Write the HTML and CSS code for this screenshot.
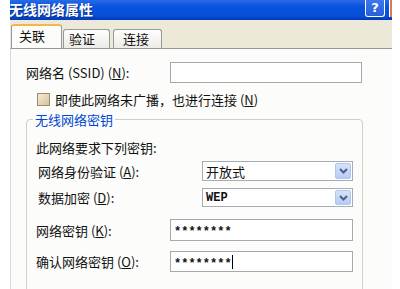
FILE: index.html
```html
<!DOCTYPE html>
<html lang="zh-CN">
<head>
    <meta charset="UTF-8">
    <meta name="viewport" content="width=device-width, initial-scale=1.0">
    <title>无线网络属性</title>
    <link rel="stylesheet" href="styles.css">
</head>
<body>
    <div class="window">
        <div class="titlebar">
            <span class="title">无线网络属性</span>
            <span class="help">?</span>
            <span class="close"></span>
        </div>

        <div class="tabs">
            <div class="tab active">关联</div>
            <div class="tab second">验证</div>
            <div class="tab third">连接</div>
        </div>

        <div class="panel">
            <div class="row ssid">
                <label class="label ssid-label">网络名 (SSID) (<u>N</u>):</label>
                <div class="textbox ssid-box"></div>
            </div>

            <div class="check-row">
                <span class="checkbox"></span>
                <span>即使此网络未广播，也进行连接 (<u>N</u>)</span>
            </div>

            <fieldset class="group">
                <legend>无线网络密钥</legend>

                <div class="row note">此网络要求下列密钥:</div>

                <div class="row auth">
                    <label class="label select-label">网络身份验证 (<u>A</u>):</label>
                    <div class="select">
                        <span class="value">开放式</span>
                        <span class="drop">
                            <svg width="9" height="6" viewBox="0 0 9 6"><path d="M1 1 L4.5 4.5 L8 1" fill="none" stroke="#4d6185" stroke-width="2"/></svg>
                        </span>
                    </div>
                </div>

                <div class="row encrypt">
                    <label class="label select-label">数据加密 (<u>D</u>):</label>
                    <div class="select">
                        <span class="value mono">WEP</span>
                        <span class="drop">
                            <svg width="9" height="6" viewBox="0 0 9 6"><path d="M1 1 L4.5 4.5 L8 1" fill="none" stroke="#4d6185" stroke-width="2"/></svg>
                        </span>
                    </div>
                </div>

                <div class="row key">
                    <label class="label key-label">网络密钥 (<u>K</u>):</label>
                    <div class="textbox key-box"><span class="stars">********</span></div>
                </div>

                <div class="row confirm">
                    <label class="label key-label">确认网络密钥 (<u>O</u>):</label>
                    <div class="textbox key-box"><span class="stars">********</span><span class="caret"></span></div>
                </div>
            </fieldset>
        </div>
    </div>
</body>
</html>
```

FILE: styles.css
```css
* {
    margin: 0;
    padding: 0;
    box-sizing: border-box;
}

body {
    background: #ffffff;
    color: #111111;
    font-family: "Noto Sans CJK SC", sans-serif;
    font-size: 13px;
    overflow: hidden;
}

.window {
    margin-left: 10px;
    width: 382px;
    height: 289px;
    overflow: hidden;
}

/* title bar */
.titlebar {
    height: 20px;
    display: flex;
    align-items: flex-start;
    background: linear-gradient(to bottom, #2a6be6 0%, #0a55de 30%, #0650d8 80%, #0038b8 100%);
}

.title {
    color: #ffffff;
    font-weight: 700;
    font-size: 14px;
    line-height: 18px;
    margin-left: -1px;
    text-shadow: 1px 1px 0 #0a2d8a;
}

.help {
    margin-left: auto;
    width: 20px;
    height: 17px;
    border: 1px solid #ffffff;
    border-top: none;
    border-radius: 0 0 3px 3px;
    background: linear-gradient(to bottom, #3a78ef, #2a5fd6);
    color: #ffffff;
    font-family: "DejaVu Sans", sans-serif;
    font-weight: 700;
    font-size: 13px;
    line-height: 16px;
    text-align: center;
}

.close {
    width: 3px;
    height: 17px;
    margin-left: 4px;
    background: #d8785a;
    border-left: 1px solid #ffffff;
}

/* tabs */
.tabs {
    height: 28px;
    display: flex;
    align-items: flex-end;
    background: #ece9d8;
    padding-left: 1px;
}

.tab {
    height: 19px;
    border: 1px solid #919b9c;
    border-bottom: none;
    border-radius: 3px 3px 0 0;
    background: linear-gradient(to bottom, #ffffff, #ecebe5);
    font-size: 13px;
    line-height: 18px;
    padding-left: 5px;
}

.tab.active {
    width: 51px;
    height: 24px;
    border-top: 2px solid #f2b64c;
    background: #fcfcfa;
    line-height: 20px;
    padding-left: 7px;
}

.tab.second {
    width: 47px;
    margin-left: 1px;
}

.tab.third {
    width: 49px;
    margin-left: 3px;
    padding-left: 9px;
}

/* tab page */
.panel {
    height: 241px;
    border-top: 1px solid #919b9c;
    border-left: 1px solid #d8d8d0;
    background: #fcfcfa;
    padding-left: 15px;
}

.row {
    display: flex;
    align-items: center;
}

.label {
    flex-shrink: 0;
}

.ssid {
    margin-top: 13px;
    height: 21px;
}

.ssid-label {
    width: 144px;
}

.textbox {
    background: #ffffff;
    border: 1px solid #a7a9ab;
    display: flex;
    align-items: center;
}

.ssid-box {
    width: 192px;
    height: 21px;
}

.check-row {
    margin-top: 10px;
    padding-left: 11px;
    height: 13px;
    display: flex;
    align-items: center;
    gap: 5px;
    line-height: 13px;
}

.checkbox {
    width: 13px;
    height: 13px;
    border: 1px solid #a08b65;
    background: linear-gradient(135deg, #f4ecd6, #d6c49c);
}

/* group box */
.group {
    margin-top: 6px;
    width: 337px;
    height: 200px;
    border: 1px solid #d0d0bf;
    border-radius: 4px;
    padding: 0 0 0 9px;
}

.group legend {
    color: #0046d5;
    font-size: 13px;
    line-height: 15px;
    padding: 0 2px;
    margin-left: -3px;
}

.note {
    margin-top: 12px;
    height: 16px;
}

.select-label {
    width: 166px;
    padding-left: 2px;
}

.key-label {
    width: 134px;
}

.auth {
    margin-top: 6px;
    height: 20px;
}

.encrypt {
    margin-top: 7px;
    height: 19px;
}

.select {
    width: 151px;
    height: 100%;
    border: 1px solid #a5acb2;
    background: #ffffff;
    display: flex;
    align-items: center;
    padding: 1px;
}

.value {
    flex: 1;
    padding-left: 2px;
}

.mono {
    font-family: "Liberation Mono", monospace;
    font-weight: 700;
    font-size: 12px;
}

.drop {
    width: 16px;
    height: 100%;
    background: linear-gradient(to bottom, #d6e2fb, #b6cbf5);
    border: 1px solid #b1c5ef;
    border-radius: 2px;
    display: flex;
    align-items: center;
    justify-content: center;
}

.key {
    margin-top: 12px;
    height: 22px;
}

.confirm {
    margin-top: 10px;
    height: 21px;
}

.key-box {
    width: 183px;
    height: 100%;
    padding-left: 3px;
}

.stars {
    font-family: "Liberation Mono", monospace;
    font-weight: 700;
    font-size: 12px;
    line-height: 14px;
    padding-top: 4px;
}

.caret {
    width: 1px;
    height: 14px;
    background: #000000;
}
```
